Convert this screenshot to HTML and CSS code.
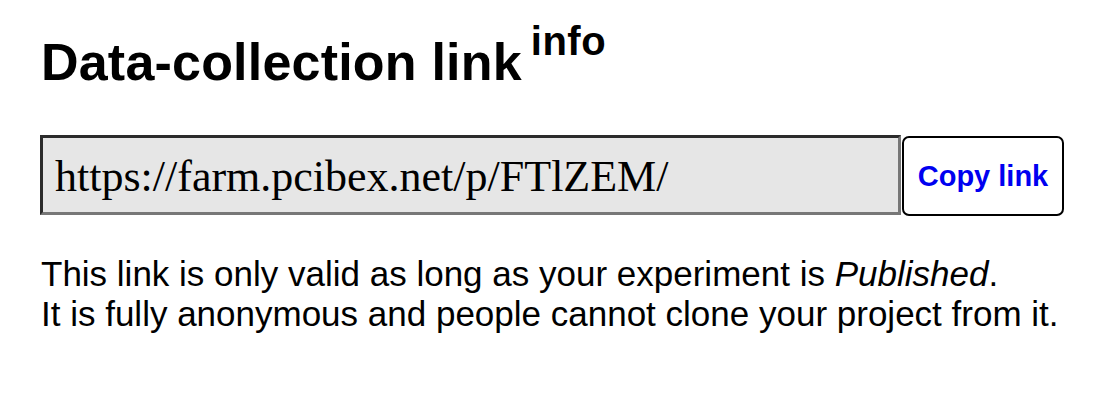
FILE: index.html
```html
<!DOCTYPE html>
<html>
<head>
<meta charset="utf-8">
<link rel="stylesheet" href="styles.css">
</head>
<body>
<main class="panel">
  <h1 class="title">Data-collection link<sup class="info">info</sup></h1>
  <div class="link-row">
    <div class="link-field">https://farm.pcibex.net/p/FTlZEM/</div>
    <button class="copy-btn">Copy link</button>
  </div>
  <p class="note">This link is only valid as long as your experiment is <em>Published</em>.<br>It is fully anonymous and people cannot clone your project from it.</p>
</main>
</body>
</html>
```

FILE: styles.css
```css
html, body {
  margin: 0;
  padding: 0;
  background: #ffffff;
}

.panel {
  padding: 32px 0 0 41px;
  font-family: "Liberation Sans", Arial, sans-serif;
  color: #000;
}

.title {
  margin: 0;
  font-size: 52px;
  font-weight: bold;
  line-height: 60px;
  letter-spacing: 0.2px;
}

.info {
  font-size: 40px;
  line-height: 0;
  vertical-align: 25px;
  margin-left: 9px;
  letter-spacing: 0.5px;
}

.link-row {
  display: flex;
  align-items: stretch;
  margin: 43px 0 0 -1px;
  width: 1023px;
  height: 80px;
}

.link-field {
  flex: 0 0 861px;
  box-sizing: border-box;
  display: flex;
  align-items: center;
  padding: 2px 12px 0;
  background: #e6e6e6;
  border-style: solid;
  border-width: 3px;
  border-color: #2b2b2b #777777 #777777 #2b2b2b;
  font-family: "Liberation Serif", "Times New Roman", serif;
  font-size: 44px;
  color: #000;
  white-space: nowrap;
}

.copy-btn {
  flex: 0 0 162px;
  box-sizing: border-box;
  margin: 1px 0 -1px 1px;
  background: #ffffff;
  border: 2px solid #000;
  border-radius: 7px;
  font-family: "Liberation Sans", Arial, sans-serif;
  font-weight: bold;
  font-size: 29px;
  color: #0000f0;
  padding: 0;
  cursor: pointer;
}

.note {
  margin: 39px 0 0 0;
  font-size: 35px;
  line-height: 40px;
}

.note em {
  font-style: italic;
}
```
